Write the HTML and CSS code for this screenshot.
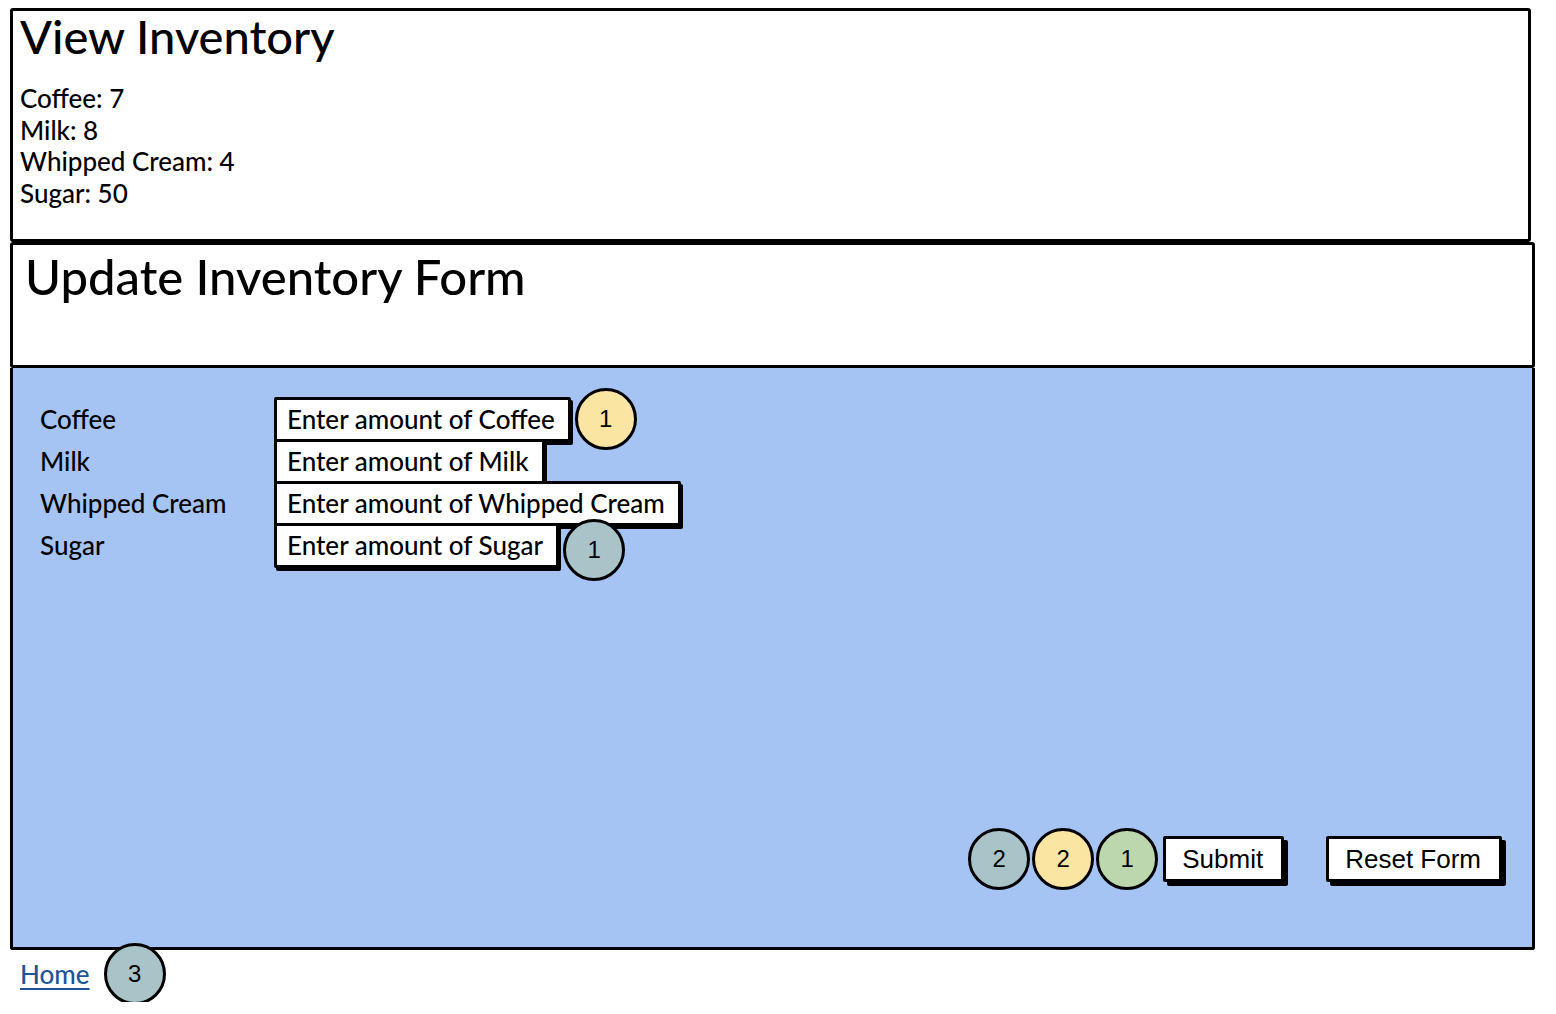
FILE: index.html
```html
<!DOCTYPE html>
<html lang="en">
<head>
    <meta charset="UTF-8">
    <meta name="viewport" content="width=device-width, initial-scale=1.0">
    <title>Update Inventory</title>
    <link rel="stylesheet" href="styles.css">
</head>
<body>

    <!-- Current stock -->
    <div class="box view-box">
        <h1>View Inventory</h1>
        <div class="stock">
            <p>Coffee: 7</p>
            <p>Milk: 8</p>
            <p>Whipped Cream: 4</p>
            <p>Sugar: 50</p>
        </div>
    </div>

    <!-- Form header -->
    <div class="box form-head">
        <h1>Update Inventory Form</h1>
    </div>

    <!-- Form body -->
    <div class="form-body">
        <div class="fields">
            <div class="row">
                <label>Coffee</label>
                <span class="field">Enter amount of Coffee</span>
                <span class="badge yellow">1</span>
            </div>
            <div class="row">
                <label>Milk</label>
                <span class="field">Enter amount of Milk</span>
            </div>
            <div class="row">
                <label>Whipped Cream</label>
                <span class="field">Enter amount of Whipped Cream</span>
            </div>
            <div class="row">
                <label>Sugar</label>
                <span class="field">Enter amount of Sugar</span>
                <span class="badge grey sugar-badge">1</span>
            </div>
        </div>

        <div class="actions">
            <span class="badge grey">2</span>
            <span class="badge yellow">2</span>
            <span class="badge green">1</span>
            <button class="btn submit">Submit</button>
            <button class="btn">Reset Form</button>
        </div>
    </div>

    <div class="footer">
        <a href="#">Home</a>
        <span class="badge grey">3</span>
    </div>

</body>
</html>
```

FILE: styles.css
```css
body {
    margin: 0;
    padding: 8px 0 0 10px;
    font-family: Lato, "Open Sans", sans-serif;
    font-weight: 500;
    color: #000;
    background: #fff;
}
.box {
    border: 3px solid #000;
    border-radius: 3px;
    box-sizing: border-box;
    background: #fff;
}
h1 {
    margin: 0;
    font-weight: 500;
    font-size: 47px;
    line-height: 1;
}
.view-box {
    width: 1521px;
    height: 234px;
    padding: 2px 7px;
}
.stock {
    margin-top: 23px;
}
.stock p {
    margin: 0;
    font-size: 26px;
    line-height: 31.5px;
}
.form-head {
    width: 1525px;
    height: 126px;
    padding: 7px 12px;
}
.form-head h1 {
    font-size: 49px;
}
.form-body {
    width: 1525px;
    height: 582px;
    box-sizing: border-box;
    border: 3px solid #000;
    border-top: none;
    border-radius: 0 0 3px 3px;
    background: #a6c4f3;
    padding: 30px 30px 65px 27px;
    display: flex;
    flex-direction: column;
}
.fields {
    display: flex;
    flex-direction: column;
}
.row {
    display: flex;
    align-items: center;
    height: 42px;
}
.row label {
    width: 234px;
    font-size: 26px;
}
.field {
    height: 45px;
    margin: -2px 0;
    box-sizing: border-box;
    display: flex;
    align-items: center;
    padding: 0 13px 0 10px;
    background: #fff;
    border: 3px solid #000;
    border-radius: 2px;
    box-shadow: 2px 3px 0 #000;
    font-size: 26px;
}
.badge {
    width: 62px;
    height: 62px;
    box-sizing: border-box;
    border: 3px solid #000;
    border-radius: 50%;
    display: flex;
    align-items: center;
    justify-content: center;
    font-family: "Liberation Sans", Arial, sans-serif;
    font-weight: 400;
    font-size: 24px;
    margin: -10px 0;
    flex-shrink: 0;
}
.row .badge {
    margin-left: 4px;
}
.sugar-badge {
    position: relative;
    top: 5px;
}
.yellow {
    background: #fbe5a2;
}
.grey {
    background: #a9c3c9;
}
.green {
    background: #bcd6ae;
}
.actions {
    margin-top: auto;
    display: flex;
    align-items: center;
    justify-content: flex-end;
    gap: 2px;
}
.btn {
    height: 46px;
    padding: 0 18px 0 16px;
    background: #fff;
    border: 3px solid #000;
    border-radius: 2px;
    box-shadow: 4px 4px 0 #000;
    font-family: "Liberation Sans", Arial, sans-serif;
    font-size: 26px;
    color: #000;
}
.submit {
    margin-left: 3px;
    margin-right: 40px;
}
.footer {
    display: flex;
    align-items: center;
    height: 56px;
    padding-left: 10px;
    margin-top: -4px;
}
.footer a {
    color: #1f5598;
    font-size: 26px;
    text-decoration-thickness: 2px;
    text-underline-offset: 4px;
    margin-right: 14px;
}
.footer .badge {
    margin: 0;
}
```
